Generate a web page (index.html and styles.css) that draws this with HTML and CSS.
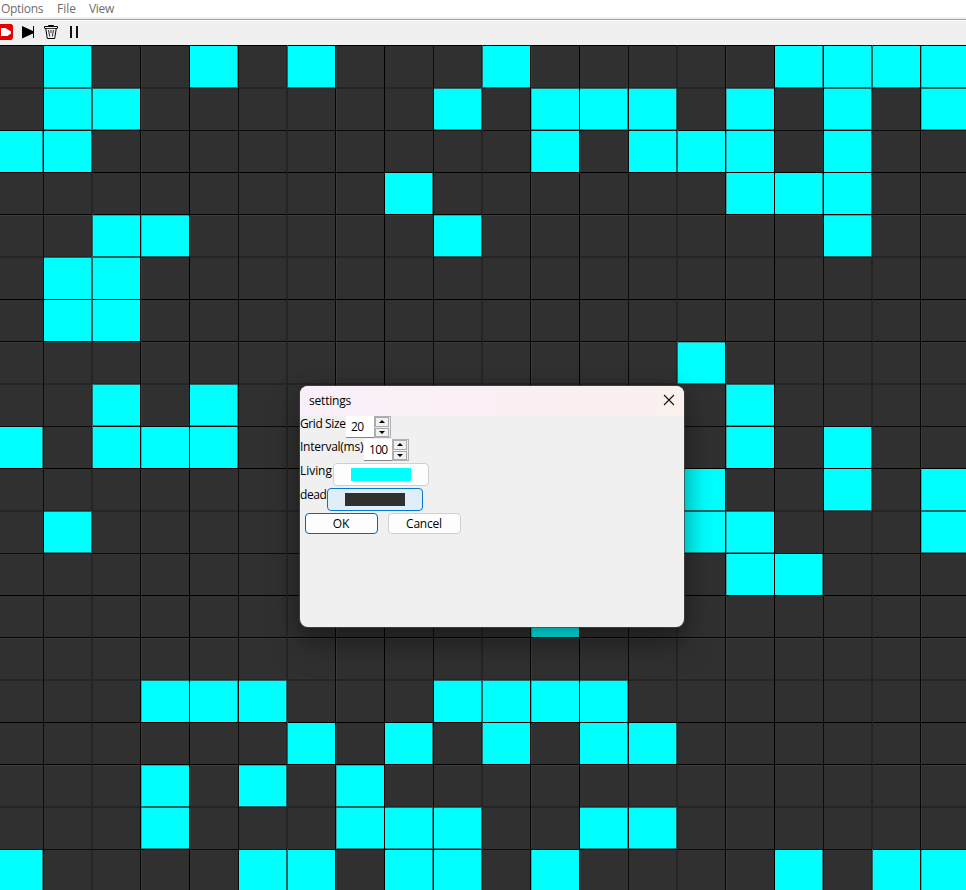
FILE: index.html
```html
<!DOCTYPE html>
<html lang="en">
<head>
<meta charset="utf-8">
<title>Game of Life</title>
<link rel="stylesheet" href="styles.css">
</head>
<body>
<div class="app">
  <nav class="menu"><span class="m-options">Options</span><span class="m-file">File</span><span class="m-view">View</span></nav>
  <div class="toolbar">
    <svg width="90" height="24" viewBox="0 21 90 24">
      <path d="M0 24H11.5L13 25.5V38L11.5 40H0Z" fill="#e80000"/>
      <path d="M1 28H5.500L11 31.500V33.500L7.500 36H1Z" fill="#fff"/>
      <path d="M22 26L33 31V26H34V38H33V33.500L22 38.500Z" fill="#000"/>
      <g fill="none" stroke="#000" stroke-width="1">
        <path d="M44.500 28.500V26.500H57.500V28.500M48.500 26V25.500H53.500V26M45.700 28L47.300 38.500H54.700L56.300 28"/>
        <path d="M45 28.500H57M48.500 30L49.700 36.500M53.500 30L52.300 36.500M51 30V33" stroke-width=".8"/>
      </g>
      <path d="M70 26H72V38H70ZM76 26H78V38H76Z" fill="#111"/>
    </svg>
  </div>
  <div class="board" id="board"></div>
</div>
<section class="dialog">
  <header class="title"><span>settings</span>
    <svg width="12" height="12" viewBox="0 0 12 12"><path d="M1 1L11 11M11 1L1 11" stroke="#111" stroke-width="1.1" fill="none"/></svg>
  </header>
  <div class="row"><label class="w-grid">Grid Size</label><span class="num">20</span><span class="spin"><i class="up"></i><i class="down"></i></span></div>
  <div class="row"><label class="w-int">Interval(ms)</label><span class="num">100</span><span class="spin"><i class="up"></i><i class="down"></i></span></div>
  <div class="row color"><label class="w-liv">Living</label><button class="pick"><i class="living"></i></button></div>
  <div class="row color"><label class="w-dead">dead</label><button class="pick active"><i class="dead"></i></button></div>
  <div class="actions"><button class="btn primary">OK</button><button class="btn">Cancel</button></div>
</section>
<script src="board.js"></script>
</body>
</html>
```
FILE: styles.css
```css
* { box-sizing: border-box; }
body { margin: 0; width: 966px; height: 890px; overflow: hidden; font: 12px/16px "Open Sans", "Noto Sans", sans-serif; color: #000; }
.app { display: flex; flex-direction: column; height: 890px; }
.menu { display: flex; height: 17px; padding-left: 1px; background: #fff; color: #6d6d6d; line-height: 18px; white-space: nowrap; }
.m-options { width: 56px; letter-spacing: -.3px; }
.m-file { width: 32px; }
.m-view { letter-spacing: -.3px; }
.toolbar { height: 28px; background: linear-gradient(#f0f0f0 2px, #a0a0a0 2px 3px, #fff 3px 4px, #f0f0f0 4px); padding-top: 4px; }
.toolbar svg { display: block; }
.board {
  display: grid; height: 845px; background: #303030;
  grid-template-columns: 43px 49px 48px 49px 49px 49px 48px 49px 49px 49px 48px 49px 49px 49px 48px 49px 49px 49px 48px 46px;
  grid-template-rows: 43px 42px 42px 42px 43px 42px 42px 43px 42px 42px 43px 42px 42px 42px 43px 42px 42px 43px 42px 41px;
}
.cell {
  --fill: #303030; --soft: #252525; --near: #303030; --after: #3b3b3b;
  --l1: transparent; --l2: transparent; --t1: transparent; --t2: transparent; --r: transparent; --b: transparent;
  background: var(--fill);
  box-shadow: inset 1px 0 var(--l1), inset 0 1px var(--t1), inset -1px 0 var(--r), inset 0 -1px var(--b), inset 2px 0 var(--l2), inset 0 2px var(--t2);
}
.alive { --fill: #00ffff; --soft: #266464; --near: #258787; --after: #3aa5a5; }
.left-a { --l1: #000; }
.left-b { --l1: #0b0b0b; }
.left-c { --l1: var(--soft); }
.left-d { --l1: #050505; --l2: var(--after); }
.top-a { --t1: #000; }
.top-b { --t1: #0b0b0b; }
.top-c { --t1: var(--soft); }
.top-d { --t1: #050505; --t2: var(--after); }
.right-b { --r: var(--near); }
.right-c { --r: var(--soft); }
.bottom-b { --b: var(--near); }
.bottom-c { --b: var(--soft); }

.dialog { position: absolute; left: 300px; top: 386px; width: 384px; height: 241px; border-radius: 8px; background: #f0f0f0; overflow: hidden; box-shadow: 0 0 0 1px rgba(70,70,70,.75), 0 16px 32px rgba(0,0,0,.36), 0 2px 20px rgba(0,0,0,.14); white-space: nowrap; }
.title { display: flex; justify-content: space-between; height: 30px; padding: 8px 9px; background: linear-gradient(90deg, #f9effa, #faf0ee); line-height: 14px; }
.title span { margin-top: -.5px; letter-spacing: -.2px; }
.row { display: flex; height: 23px; }
.row label { line-height: 16px; }
.w-grid { width: 46px; letter-spacing: -.4px; }
.w-int { width: 64px; letter-spacing: -.25px; }
.w-liv { width: 33px; letter-spacing: -.05px; }
.w-dead { width: 27px; letter-spacing: -.4px; }
.row.color .w-dead { line-height: 15px; }
.num { width: 28px; height: 22px; padding-left: 5px; background: #fff; border-bottom: 1px solid #858585; line-height: 21px; letter-spacing: -.7px; }
.spin { display: flex; flex-direction: column; width: 17px; height: 22px; padding: 0 1px 0 0; gap: 1px; background: #ececec; border: 1px solid #b0b0b4; }
.spin i { flex: 1; display: flex; align-items: center; justify-content: center; border: 1px solid #a9a9ae; background: #f1f1f1; }
.spin i::after { content: ""; border: 3px solid transparent; border-top-width: 0; border-bottom-color: #000; }
.spin .down::after { border-top: 3px solid #000; border-bottom: 0; }
.row.color { height: 25px; }
.row.color label { line-height: 17px; }
.pick { display: flex; align-items: center; justify-content: center; width: 96px; height: 23px; margin: 1px 0 0; padding: 0 0 1px; border: 1px solid #d0d0d0; border-radius: 4px; background: #fdfdfd; }
.pick.active { border-color: #0078d4; background: #e0eef9; }
.pick i { width: 60px; height: 13px; }
.living { background: #00ffff; }
.dead { background: #303030; }
.actions { display: flex; gap: 10px; padding: 1px 0 0 5px; }
.btn { width: 73px; height: 21px; padding: 0 1px 0 0; border: 1px solid #d0d0d0; border-radius: 4px; background: #fdfdfd; font: inherit; line-height: 18px; letter-spacing: -.2px; color: #000; }
.btn.primary { border-color: #0067c0; }
```
FILE: board.js
```js
const living = [
  [1,4,6,10,16,17,18,19], [1,2,9,11,12,13,15,17,19], [0,1,11,13,14,15,17], [8,15,16,17],
  [2,3,9,17], [1,2], [1,2], [14], [2,4,15], [0,2,3,4,15,17],
  [14,17,19], [1,14,15,19], [15,16], [11], [], [3,4,5,9,10,11,12],
  [6,8,10,12,13], [3,5,7], [3,7,8,9,12,13], [0,5,6,8,9,11,16,18,19]
];
// Weight of the grid line that opens each column and each row.
const columnLines = "-bcdabcdabcdabcdabcd";
const rowLines = "acbadcadcbacbadcadcb";
const board = document.getElementById("board");
for (let y = 0; y < 20; y++) {
  for (let x = 0; x < 20; x++) {
    const cell = document.createElement("div");
    cell.className = `cell left-${columnLines[x]} top-${rowLines[y]} right-${columnLines[x + 1] || "x"} bottom-${rowLines[y + 1] || "x"}`;
    if (living[y].includes(x)) cell.classList.add("alive");
    board.append(cell);
  }
}
```
